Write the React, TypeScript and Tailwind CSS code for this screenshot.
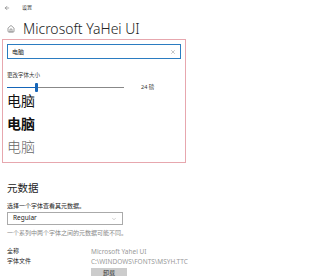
import { ArrowLeft, Home, X, ChevronDown } from "lucide-react";

const cjk = "font-['Noto_Sans','Noto_Sans_CJK_SC',sans-serif]";

export default function App() {
    return (
        <div className={`w-[327px] h-[276px] overflow-hidden bg-white text-[#111] ${cjk}`}>
            {/* title bar */}
            <div className="flex items-center h-[12px] pt-[3px] pl-[4px]">
                <ArrowLeft className="w-[6px] h-[6px] text-[#555]" strokeWidth={2} />
                <span className="ml-[12px] text-[5px] leading-none text-[#333]">设置</span>
            </div>

            {/* header */}
            <div className="flex items-center mt-[10px] pl-[7px] h-[14px]">
                <Home className="w-[8px] h-[8px] text-[#444]" strokeWidth={1.6} />
                <span className="ml-[8px] text-[14px] leading-none font-light text-[#222]">Microsoft YaHei UI</span>
            </div>

            {/* preview panel */}
            <div className="mt-[3px] ml-[2px] w-[184px] border border-[#e7a7ae] pt-[4px] pb-[4px] px-[4px]">
                <div className="flex items-center h-[15px] border border-[#2b7cc1] px-[4px] justify-between">
                    <span className="text-[6px] leading-none text-[#222]">电脑</span>
                    <X className="w-[6px] h-[6px] text-[#666]" strokeWidth={1.5} />
                </div>
                <div className="mt-[14px] text-[5.5px] leading-none text-[#333]">更改字体大小</div>
                <div className="flex items-center mt-[4px] h-[10px]">
                    <div className="relative w-[117px] h-[1px] bg-[#888]">
                        <div className="absolute left-0 top-0 w-[29px] h-[1px] bg-[#1565b8]" />
                        <div className="absolute left-[28px] top-[-4px] w-[3px] h-[9px] rounded-[1px] bg-[#1565b8]" />
                    </div>
                    <span className="ml-[17px] text-[5.5px] leading-none text-[#333]">24 磅</span>
                </div>
                <div className="mt-[-4px] text-[14px] leading-[23px] text-[#111]">电脑</div>
                <div className="text-[14px] leading-[23px] font-bold text-[#111]">电脑</div>
                <div className="text-[14px] leading-[23px] font-light text-[#666]">电脑</div>
            </div>

            {/* metadata */}
            <div className="pl-[7px] mt-[20px]">
                <div className="text-[10.5px] leading-none text-[#222]">元数据</div>
                <div className="mt-[10px] text-[6px] leading-none text-[#222]">选择一个字体查看其元数据。</div>
                <div className="mt-[3px] w-[116px] h-[13px] border border-[#aaa] flex items-center justify-between px-[5px]">
                    <span className="text-[6.5px] leading-none text-[#222]">Regular</span>
                    <ChevronDown className="w-[6px] h-[6px] text-[#888]" strokeWidth={1.5} />
                </div>
                <div className="mt-[5px] text-[6px] leading-none text-[#888]">一个系列中两个字体之间的元数据可能不同。</div>
                <div className="mt-[12px] grid grid-cols-[84px_1fr] gap-y-[3px] items-center">
                    <span className="text-[6px] leading-[7px] text-[#222]">全称</span>
                    <span className="text-[6.5px] leading-[7px] text-[#999]">Microsoft Yahei UI</span>
                    <span className="text-[6px] leading-[7px] text-[#222]">字体文件</span>
                    <span className="text-[6.5px] leading-[7px] text-[#999]">C:\WINDOWS\FONTS\MSYH.TTC</span>
                </div>
                <div className="ml-[84px] mt-[3px] w-[36px] h-[10px] bg-[#ccc] flex items-center justify-center text-[6px] leading-none text-[#333]">卸载</div>
            </div>
        </div>
    );
}
